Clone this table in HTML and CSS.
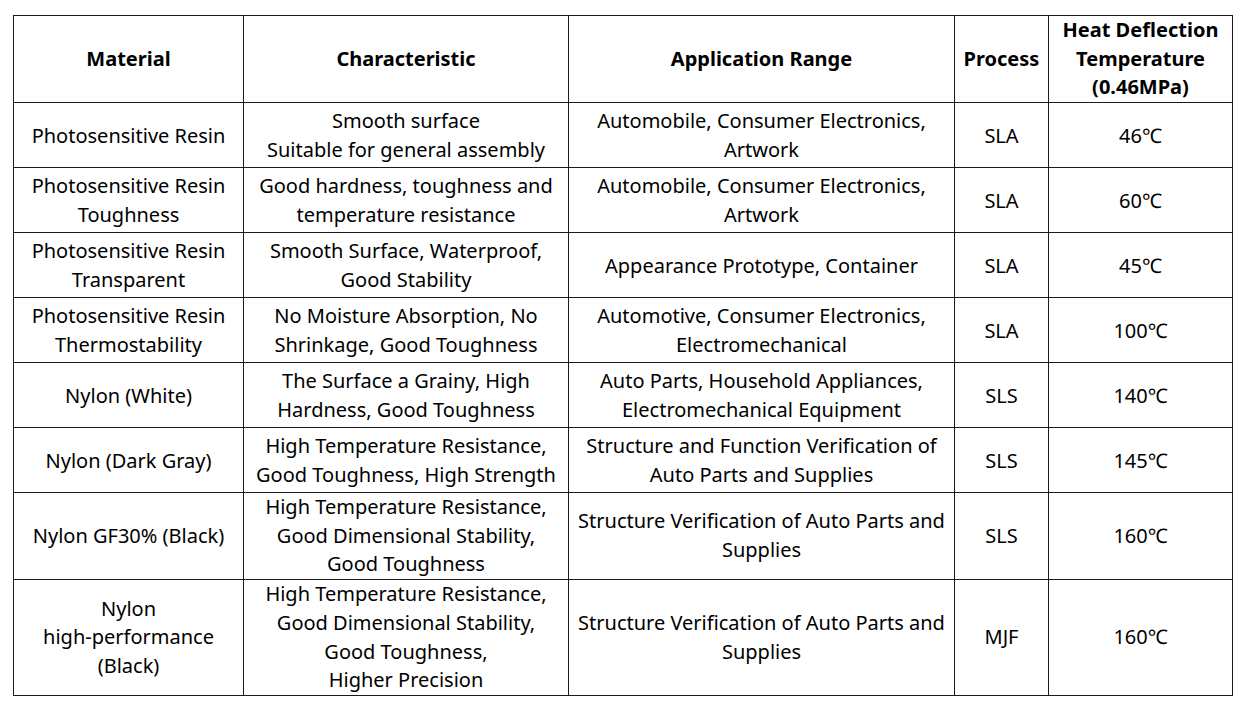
FILE: index.html
```html
<!DOCTYPE html>
<html lang="en">
<head>
<meta charset="utf-8">
<title>Materials</title>
<link rel="stylesheet" href="styles.css">
</head>
<body>
<div class="page">
<table class="spec">
  <colgroup>
    <col class="c-mat"><col class="c-char"><col class="c-app"><col class="c-proc"><col class="c-temp">
  </colgroup>
  <thead>
    <tr class="head">
      <th>Material</th>
      <th>Characteristic</th>
      <th>Application Range</th>
      <th>Process</th>
      <th>Heat Deflection<br>Temperature<br>(0.46MPa)</th>
    </tr>
  </thead>
  <tbody>
    <tr class="r2">
      <td>Photosensitive Resin</td>
      <td>Smooth surface<br>Suitable for general assembly</td>
      <td>Automobile, Consumer Electronics,<br>Artwork</td>
      <td>SLA</td>
      <td>46℃</td>
    </tr>
    <tr class="r2">
      <td>Photosensitive Resin<br>Toughness</td>
      <td>Good hardness, toughness and<br>temperature resistance</td>
      <td>Automobile, Consumer Electronics,<br>Artwork</td>
      <td>SLA</td>
      <td>60℃</td>
    </tr>
    <tr class="r2">
      <td>Photosensitive Resin<br>Transparent</td>
      <td>Smooth Surface, Waterproof,<br>Good Stability</td>
      <td>Appearance Prototype, Container</td>
      <td>SLA</td>
      <td>45℃</td>
    </tr>
    <tr class="r2">
      <td>Photosensitive Resin<br>Thermostability</td>
      <td>No Moisture Absorption, No<br>Shrinkage, Good Toughness</td>
      <td>Automotive, Consumer Electronics,<br>Electromechanical</td>
      <td>SLA</td>
      <td>100℃</td>
    </tr>
    <tr class="r2">
      <td>Nylon (White)</td>
      <td>The Surface a Grainy, High<br>Hardness, Good Toughness</td>
      <td>Auto Parts, Household Appliances,<br>Electromechanical Equipment</td>
      <td>SLS</td>
      <td>140℃</td>
    </tr>
    <tr class="r2">
      <td>Nylon (Dark Gray)</td>
      <td>High Temperature Resistance,<br>Good Toughness, High Strength</td>
      <td>Structure and Function Verification of<br>Auto Parts and Supplies</td>
      <td>SLS</td>
      <td>145℃</td>
    </tr>
    <tr class="r3">
      <td>Nylon GF30% (Black)</td>
      <td>High Temperature Resistance,<br>Good Dimensional Stability,<br>Good Toughness</td>
      <td>Structure Verification of Auto Parts and<br>Supplies</td>
      <td>SLS</td>
      <td>160℃</td>
    </tr>
    <tr class="r4">
      <td>Nylon<br>high-performance<br>(Black)</td>
      <td>High Temperature Resistance,<br>Good Dimensional Stability,<br>Good Toughness,<br>Higher Precision</td>
      <td>Structure Verification of Auto Parts and<br>Supplies</td>
      <td>MJF</td>
      <td>160℃</td>
    </tr>
  </tbody>
</table>
</div>
</body>
</html>
```

FILE: styles.css
```css
html, body {
  margin: 0;
  padding: 0;
  background: #ffffff;
}
.page {
  padding: 15px 0 0 13px;
}
.spec {
  border-collapse: collapse;
  table-layout: fixed;
  width: 1219px;
  font-family: "Noto Sans", "Open Sans", sans-serif;
  font-size: 20px;
  line-height: 28.6px;
  color: #000000;
}
.c-mat { width: 230px; }
.c-char { width: 325px; }
.c-app { width: 386px; }
.c-proc { width: 94px; }
.c-temp { width: 184px; }
.spec th, .spec td {
  border: 1px solid #1a1a1a;
  padding: 0;
  text-align: center;
  vertical-align: middle;
  white-space: nowrap;
}
.spec th {
  font-weight: 700;
}
.head {
  height: 87px;
}
.r2 {
  height: 65px;
}
.r2 td {
  line-height: 29px;
}
.r3 {
  height: 87px;
}
.r4 {
  height: 116px;
}
```
